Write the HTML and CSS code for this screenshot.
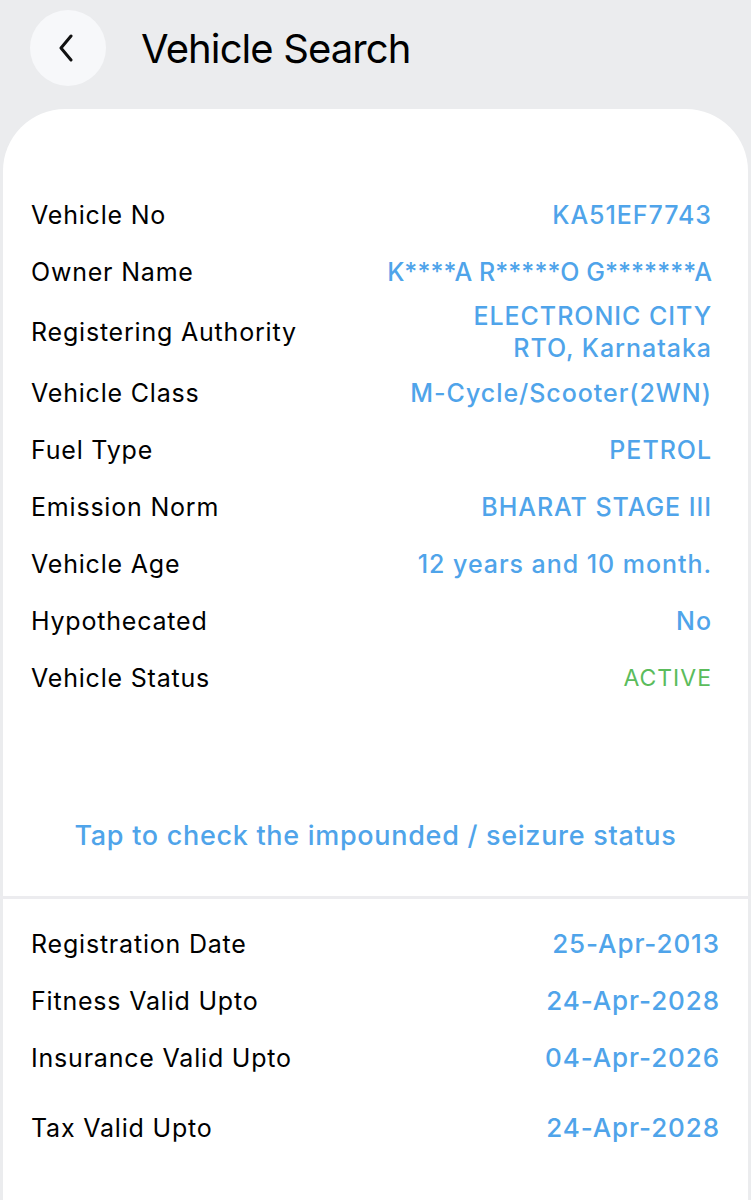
FILE: index.html
```html
<!DOCTYPE html>
<html lang="en">
<head>
<meta charset="utf-8">
<title>Vehicle Search</title>
<link rel="stylesheet" href="styles.css">
</head>
<body>
<header class="topbar">
  <div class="back-btn">
    <svg width="16" height="28" viewBox="0 0 16 28" fill="none">
      <path d="M13 2 L3 14 L13 26" stroke="#111" stroke-width="3" stroke-linecap="round" stroke-linejoin="round"/>
    </svg>
  </div>
  <h1 class="title">Vehicle Search</h1>
</header>
<main class="card">
  <section class="details">
    <div class="row"><span class="label">Vehicle No</span><span class="value">KA51EF7743</span></div>
    <div class="row"><span class="label">Owner Name</span><span class="value masked">K****A R*****O G*******A</span></div>
    <div class="row"><span class="label">Registering Authority</span><span class="value">ELECTRONIC CITY<br>RTO, Karnataka</span></div>
    <div class="row"><span class="label">Vehicle Class</span><span class="value">M-Cycle/Scooter(2WN)</span></div>
    <div class="row"><span class="label">Fuel Type</span><span class="value">PETROL</span></div>
    <div class="row"><span class="label">Emission Norm</span><span class="value">BHARAT STAGE III</span></div>
    <div class="row"><span class="label">Vehicle Age</span><span class="value">12 years and 10 month.</span></div>
    <div class="row"><span class="label">Hypothecated</span><span class="value">No</span></div>
    <div class="row"><span class="label">Vehicle Status</span><span class="value status">ACTIVE</span></div>
  </section>
  <div class="tap-link">Tap to check the impounded / seizure status</div>
  <div class="divider"></div>
  <section class="dates">
    <div class="row"><span class="label">Registration Date</span><span class="value">25-Apr-2013</span></div>
    <div class="row"><span class="label">Fitness Valid Upto</span><span class="value">24-Apr-2028</span></div>
    <div class="row"><span class="label">Insurance Valid Upto</span><span class="value">04-Apr-2026</span></div>
    <div class="row row-tax"><span class="label">Tax Valid Upto</span><span class="value">24-Apr-2028</span></div>
  </section>
</main>
</body>
</html>
```

FILE: styles.css
```css
* { box-sizing: border-box; }
html, body { margin: 0; padding: 0; }
body {
  background: #ebecee;
  font-family: Inter, "Noto Sans", sans-serif;
  color: #000;
  width: 751px;
  height: 1200px;
  overflow: hidden;
}
.topbar {
  display: flex;
  align-items: center;
  padding: 10px 0 0 30px;
  height: 86px;
}
.back-btn {
  width: 76px;
  height: 76px;
  border-radius: 50%;
  background: #f7f8fa;
  display: flex;
  align-items: center;
  justify-content: center;
  padding-right: 4px;
}
.title {
  margin: 2px 0 0 35px;
  font-size: 40px;
  font-weight: 400;
  letter-spacing: -0.9px;
  line-height: 48px;
}
.card {
  margin: 23px 3px 0 3px;
  background: #fff;
  border-radius: 62px 62px 0 0;
  height: 1100px;
  padding-top: 77px;
}
.row {
  display: flex;
  justify-content: space-between;
  align-items: center;
  min-height: 57px;
}
.label {
  font-size: 25px;
  line-height: 32px;
  font-weight: 400;
  letter-spacing: 0.8px;
}
.value {
  font-size: 25px;
  line-height: 32px;
  font-weight: 500;
  color: #4fa4ea;
  text-align: right;
  letter-spacing: 0.95px;
}
.value.masked { letter-spacing: 0.05px; }
.value.status {
  color: #5bbc5c;
  font-weight: 400;
  font-size: 23px;
  letter-spacing: 1px;
}
.details { padding: 0 36px 0 28px; }
.tap-link {
  margin-top: 114px;
  margin-bottom: 44px;
  text-align: center;
  font-size: 27px;
  line-height: 32px;
  font-weight: 500;
  color: #4fa4ea;
  letter-spacing: 0.7px;
}
.divider {
  height: 3px;
  background: #ececef;
  margin: 0 -3px;
}
.dates {
  padding: 16px 28px 0 28px;
}
.dates .value { font-size: 26px; letter-spacing: 0.9px; }
.row-tax { margin-top: 13px; }
```
